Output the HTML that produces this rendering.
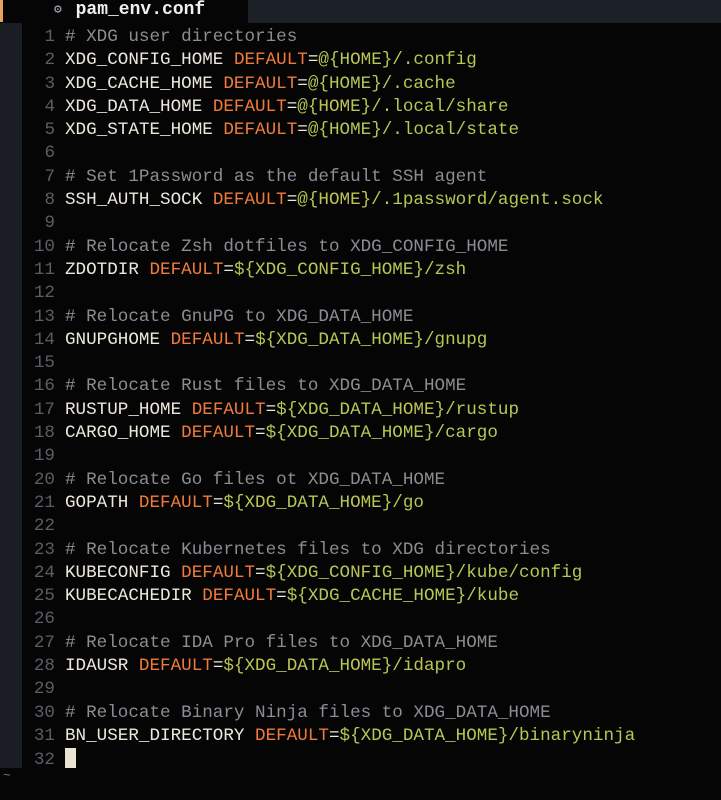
<!DOCTYPE html><html><head><style>
body{margin:0;width:721px;height:800px;background:#050505;overflow:hidden;position:relative;font-family:"Liberation Mono","DejaVu Sans Mono",monospace;}
.tabbar{position:absolute;top:0;left:0;width:721px;height:23px;background:#1c2128;}
.tab{position:absolute;left:0;top:0;width:248px;height:23px;background:#050505;}
.or{position:absolute;left:0;top:0;width:3px;height:22px;background:#e8a060;}
.tab span{position:absolute;left:54px;top:0px;font-size:18px;font-weight:bold;color:#f0f0f0;}
.tab i{position:absolute;left:54px;top:2px;font-style:normal;font-size:13px;color:#aab;}
.gut{position:absolute;left:0;top:23px;width:22px;height:745px;background:#1a1e24;}
.code{position:absolute;top:26px;left:0;font-size:17.6px;line-height:23.29px;color:#ece8dc;white-space:pre;}
.ln{display:inline-block;width:55px;text-align:right;color:#5a5e66;margin-right:10px;}
.c{color:#8a8d93}.k{color:#f07a3a}.s{color:#b9c654}
.cur{display:inline-block;width:11px;height:20px;background:#eae4d2;vertical-align:-4px;}
.t{position:absolute;left:3px;top:768px;color:#777;font-size:13px;}
</style></head><body>
<div class="tabbar"><div class="tab"><div class="or"></div><i>⚙</i><span>&nbsp; pam_env.conf</span></div></div>
<div class="gut"></div>
<div class="code"><span class="ln">1</span><span class="c"># XDG user directories</span>
<span class="ln">2</span>XDG_CONFIG_HOME <span class="k">DEFAULT</span>=<span class="s">@{HOME}/.config</span>
<span class="ln">3</span>XDG_CACHE_HOME <span class="k">DEFAULT</span>=<span class="s">@{HOME}/.cache</span>
<span class="ln">4</span>XDG_DATA_HOME <span class="k">DEFAULT</span>=<span class="s">@{HOME}/.local/share</span>
<span class="ln">5</span>XDG_STATE_HOME <span class="k">DEFAULT</span>=<span class="s">@{HOME}/.local/state</span>
<span class="ln">6</span>
<span class="ln">7</span><span class="c"># Set 1Password as the default SSH agent</span>
<span class="ln">8</span>SSH_AUTH_SOCK <span class="k">DEFAULT</span>=<span class="s">@{HOME}/.1password/agent.sock</span>
<span class="ln">9</span>
<span class="ln">10</span><span class="c"># Relocate Zsh dotfiles to XDG_CONFIG_HOME</span>
<span class="ln">11</span>ZDOTDIR <span class="k">DEFAULT</span>=<span class="s">${XDG_CONFIG_HOME}/zsh</span>
<span class="ln">12</span>
<span class="ln">13</span><span class="c"># Relocate GnuPG to XDG_DATA_HOME</span>
<span class="ln">14</span>GNUPGHOME <span class="k">DEFAULT</span>=<span class="s">${XDG_DATA_HOME}/gnupg</span>
<span class="ln">15</span>
<span class="ln">16</span><span class="c"># Relocate Rust files to XDG_DATA_HOME</span>
<span class="ln">17</span>RUSTUP_HOME <span class="k">DEFAULT</span>=<span class="s">${XDG_DATA_HOME}/rustup</span>
<span class="ln">18</span>CARGO_HOME <span class="k">DEFAULT</span>=<span class="s">${XDG_DATA_HOME}/cargo</span>
<span class="ln">19</span>
<span class="ln">20</span><span class="c"># Relocate Go files ot XDG_DATA_HOME</span>
<span class="ln">21</span>GOPATH <span class="k">DEFAULT</span>=<span class="s">${XDG_DATA_HOME}/go</span>
<span class="ln">22</span>
<span class="ln">23</span><span class="c"># Relocate Kubernetes files to XDG directories</span>
<span class="ln">24</span>KUBECONFIG <span class="k">DEFAULT</span>=<span class="s">${XDG_CONFIG_HOME}/kube/config</span>
<span class="ln">25</span>KUBECACHEDIR <span class="k">DEFAULT</span>=<span class="s">${XDG_CACHE_HOME}/kube</span>
<span class="ln">26</span>
<span class="ln">27</span><span class="c"># Relocate IDA Pro files to XDG_DATA_HOME</span>
<span class="ln">28</span>IDAUSR <span class="k">DEFAULT</span>=<span class="s">${XDG_DATA_HOME}/idapro</span>
<span class="ln">29</span>
<span class="ln">30</span><span class="c"># Relocate Binary Ninja files to XDG_DATA_HOME</span>
<span class="ln">31</span>BN_USER_DIRECTORY <span class="k">DEFAULT</span>=<span class="s">${XDG_DATA_HOME}/binaryninja</span>
<span class="ln">32</span><span class="cur"></span></div>
<div class="t">~</div>
</body></html>
